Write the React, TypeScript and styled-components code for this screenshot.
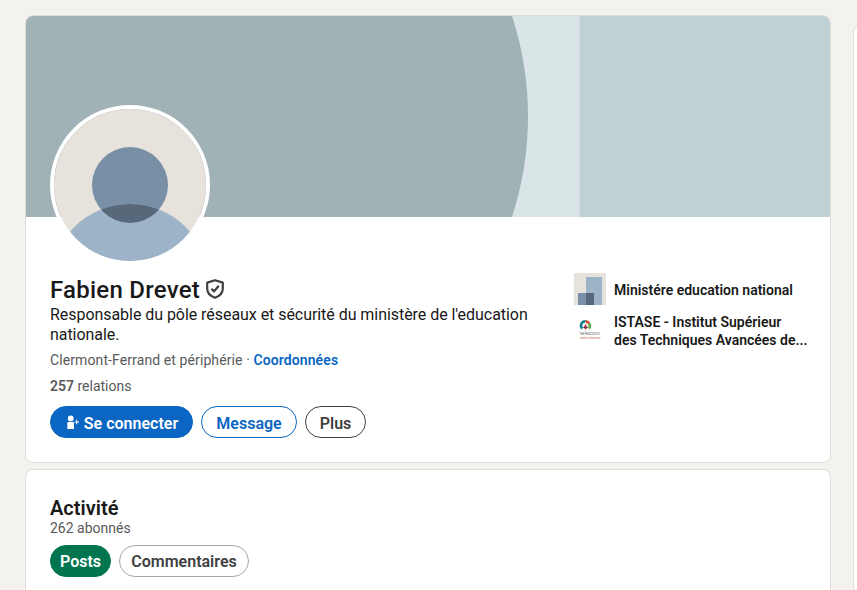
import React from 'react';
import styled, { createGlobalStyle } from 'styled-components';

const GlobalStyle = createGlobalStyle`
    html, body {
        margin: 0;
        background-color: #f4f2ee;
        height: 100%;
        overflow: hidden;
    }
    body {
        font-family: Roboto, "Noto Sans", sans-serif;
    }
    * {
        box-sizing: border-box;
    }
`

const App = () => {
    return (
        <Page>
            <GlobalStyle />
            <MainColumn>
                <ProfileCard>
                    <Banner viewBox="0 0 804 201" preserveAspectRatio="none">
                        <rect width="804" height="201" fill="#bfd1d5" />
                        <rect width="553.5" height="201" fill="#d9e5e7" />
                        <path d="M0 0H486A323.6 323.6 0 0 1 486 201H0Z" fill="#a0b2b5" />
                    </Banner>
                    <Avatar>
                        <svg viewBox="0 0 152 152" width="152" height="152">
                            <defs>
                                <clipPath id="headClip">
                                    <circle cx="76" cy="76" r="38" />
                                </clipPath>
                            </defs>
                            <rect width="152" height="152" fill="#e7e2dc" />
                            <circle cx="76" cy="76" r="38" fill="#788fa5" />
                            <circle cx="76" cy="174" r="79" fill="#9db3c8" />
                            <circle cx="76" cy="174" r="79" fill="#56687a" clipPath="url(#headClip)" />
                        </svg>
                    </Avatar>
                    <ProfileBody>
                        <Identity>
                            <NameRow>
                                <Name>Fabien Drevet</Name>
                                <svg viewBox="0 0 18 20" width="18" height="20" fill="none">
                                    <path d="M9 1.2 16.8 3.6V9.6C16.8 14 13.6 17.2 9 18.8 4.4 17.2 1.2 14 1.2 9.6V3.6Z" stroke="#404040" strokeWidth="2.2" strokeLinejoin="round" />
                                    <path d="M5.4 9.8 8 12.4 12.8 6.8" stroke="#404040" strokeWidth="2.2" />
                                </svg>
                            </NameRow>
                            <Headline>Responsable du pôle réseaux et sécurité du ministère de l'education nationale.</Headline>
                            <Location>
                                Clermont-Ferrand et périphérie · <ContactLink>Coordonnées</ContactLink>
                            </Location>
                            <Relations><strong>257</strong> relations</Relations>
                            <Actions>
                                <ActionButton $variant="primary" $width={143}>
                                    <svg viewBox="0 0 16 16" width="16" height="16" fill="#fff">
                                        <circle cx="5.7" cy="4.4" r="2.9" />
                                        <path d="M2.3 9.2C2.3 8.4 2.9 8 3.6 8H7.8C8.5 8 9 8.4 9 9.2V15H2.3Z" />
                                        <path d="M11.2 5.8H12.2V7.5H14V8.5H12.2V10.2H11.2V8.5H9.6V7.5H11.2Z" />
                                    </svg>
                                    Se connecter
                                </ActionButton>
                                <ActionButton $variant="outline" $width={96}>Message</ActionButton>
                                <ActionButton $variant="muted" $width={61}>Plus</ActionButton>
                            </Actions>
                        </Identity>
                        <Affiliations>
                            <Affiliation>
                                <svg viewBox="0 0 32 32" width="32" height="32">
                                    <rect width="32" height="32" fill="#e7e2dc" />
                                    <rect x="12" y="4" width="16" height="28" fill="#9db3c8" />
                                    <rect x="4" y="20" width="16" height="12" fill="#788fa5" />
                                    <rect x="12" y="20" width="8" height="12" fill="#56687a" />
                                </svg>
                                <AffiliationName $offset={2}>Ministére education national</AffiliationName>
                            </Affiliation>
                            <Affiliation>
                                <svg viewBox="0 0 32 32" width="32" height="32" fill="none">
                                    <path d="M8.2 13.6A4.4 4.4 0 0 1 11.5 6.2" stroke="#0f7f8c" strokeWidth="2.6" />
                                    <path d="M11.5 6.2A4.4 4.4 0 0 1 15 8.2" stroke="#d8452e" strokeWidth="2.6" />
                                    <path d="M15 8.2A4.4 4.4 0 0 1 14.8 13.6" stroke="#6aa84f" strokeWidth="2.6" />
                                    <path d="M9.8 13A2 2 0 0 1 13.2 13" stroke="#1f3f66" strokeWidth="1.6" />
                                    <rect x="10.8" y="9.5" width="1.6" height="4.8" fill="#c7262e" />
                                    <text x="6" y="20.4" fontSize="5.6" fill="#777" fontFamily="Liberation Sans, sans-serif">telecom</text>
                                    <text x="6" y="24" fontSize="3.6" fill="#d0564f" fontFamily="Liberation Sans, sans-serif">saint-étienne</text>
                                </svg>
                                <AffiliationName>ISTASE - Institut Supérieur<br />des Techniques Avancées de...</AffiliationName>
                            </Affiliation>
                        </Affiliations>
                    </ProfileBody>
                </ProfileCard>
                <ActivityCard>
                    <ActivityTitle>Activité</ActivityTitle>
                    <Followers>262 abonnés</Followers>
                    <Pills>
                        <Pill $active $width={61}>Posts</Pill>
                        <Pill $width={130}>Commentaires</Pill>
                    </Pills>
                </ActivityCard>
            </MainColumn>
            <SideCard />
        </Page>
    );
};

export default App;

const Page = styled.div`
    display: flex;
    gap: 22px;
    height: 590px;
    overflow: hidden;
    padding: 15px 0 0 25px;
    width: 857px;
`
const MainColumn = styled.div`
    display: flex;
    flex-direction: column;
    flex: 0 0 806px;
    gap: 6px;
`
const Card = styled.section`
    background-color: #fff;
    border: 1px solid #dfdeda;
    border-radius: 8px;
    overflow: hidden;
`
const ProfileCard = styled(Card)`
    flex: 0 0 448px;
    position: relative;
`
const Banner = styled.svg`
    display: block;
    height: 201px;
    width: 804px;
`
const Avatar = styled.div`
    border: 4px solid #fff;
    border-radius: 50%;
    height: 160px;
    left: 24px;
    overflow: hidden;
    position: absolute;
    top: 89px;
    width: 160px;
    svg{
        display: block;
    }
`
const ProfileBody = styled.div`
    display: flex;
    justify-content: space-between;
    padding: 56px 24px 0;
`
const Identity = styled.div`
    width: 490px;
`
const NameRow = styled.div`
    align-items: center;
    display: flex;
    gap: 6px;
    height: 32px;
`
const Name = styled.h1`
    color: #191919;
    font-size: 24px;
    font-weight: 500;
    letter-spacing: 0.25px;
    line-height: 30px;
    margin: 0;
    padding-top: 2px;
`
const Headline = styled.p`
    color: #191919;
    font-size: 16px;
    letter-spacing: -0.05px;
    line-height: 20px;
    margin: 0;
`
const Location = styled.p`
    color: #595959;
    font-size: 14px;
    letter-spacing: 0.1px;
    line-height: 20px;
    margin: 5px 0 0;
`
const ContactLink = styled.span`
    color: #0a66c2;
    font-weight: 600;
`
const Relations = styled.p`
    color: #595959;
    font-size: 14px;
    line-height: 20px;
    margin: 6px 0 0;
    strong{
        font-weight: 600;
    }
`
const Actions = styled.div`
    display: flex;
    gap: 8px;
    margin-top: 10px;
`
const ActionButton = styled.button<{ $variant: 'primary' | 'outline' | 'muted', $width: number }>`
    align-items: center;
    background-color: ${(props) => props.$variant === 'primary' ? '#0a66c2' : '#fff'};
    border: 1px solid ${(props) => props.$variant === 'muted' ? '#404040' : '#0a66c2'};
    border-radius: 16px;
    color: ${(props) => props.$variant === 'primary' ? '#fff' : props.$variant === 'muted' ? '#404040' : '#0a66c2'};
    display: flex;
    font-family: inherit;
    font-size: 16px;
    font-weight: 600;
    gap: 3px;
    height: 32px;
    justify-content: center;
    padding: 2px 0 0;
    width: ${(props) => props.$width}px;
    svg{
        margin-top: -2px;
    }
`
const Affiliations = styled.div`
    display: flex;
    flex-direction: column;
    gap: 8px;
    width: 232px;
`
const Affiliation = styled.div`
    align-items: center;
    display: flex;
    gap: 8px;
    svg{
        flex-shrink: 0;
    }
`
const AffiliationName = styled.span<{ $offset?: number }>`
    color: #191919;
    font-size: 14px;
    font-weight: 600;
    line-height: 18px;
    padding-top: ${(props) => props.$offset || 0}px;
    white-space: nowrap;
`
const ActivityCard = styled(Card)`
    flex: 0 0 200px;
    padding: 26px 24px 0;
`
const ActivityTitle = styled.h2`
    color: #191919;
    font-size: 20px;
    font-weight: 600;
    line-height: 24px;
    margin: 0;
`
const Followers = styled.p`
    color: #595959;
    font-size: 14px;
    line-height: 16px;
    margin: 0;
`
const Pills = styled.div`
    display: flex;
    gap: 8px;
    margin-top: 9px;
`
const Pill = styled.button<{ $active?: boolean, $width: number }>`
    background-color: ${(props) => props.$active ? '#01754f' : '#fff'};
    border: 1px solid ${(props) => props.$active ? '#01754f' : '#a8a8a8'};
    border-radius: 16px;
    color: ${(props) => props.$active ? '#fff' : '#404040'};
    font-family: inherit;
    font-size: 16px;
    font-weight: 600;
    height: 32px;
    padding: 0;
    width: ${(props) => props.$width}px;
`
const SideCard = styled.aside`
    background-color: #fff;
    border: 1px solid #dfdeda;
    border-radius: 8px;
    flex: 0 0 40px;
    height: 570px;
    margin-top: 10px;
`
